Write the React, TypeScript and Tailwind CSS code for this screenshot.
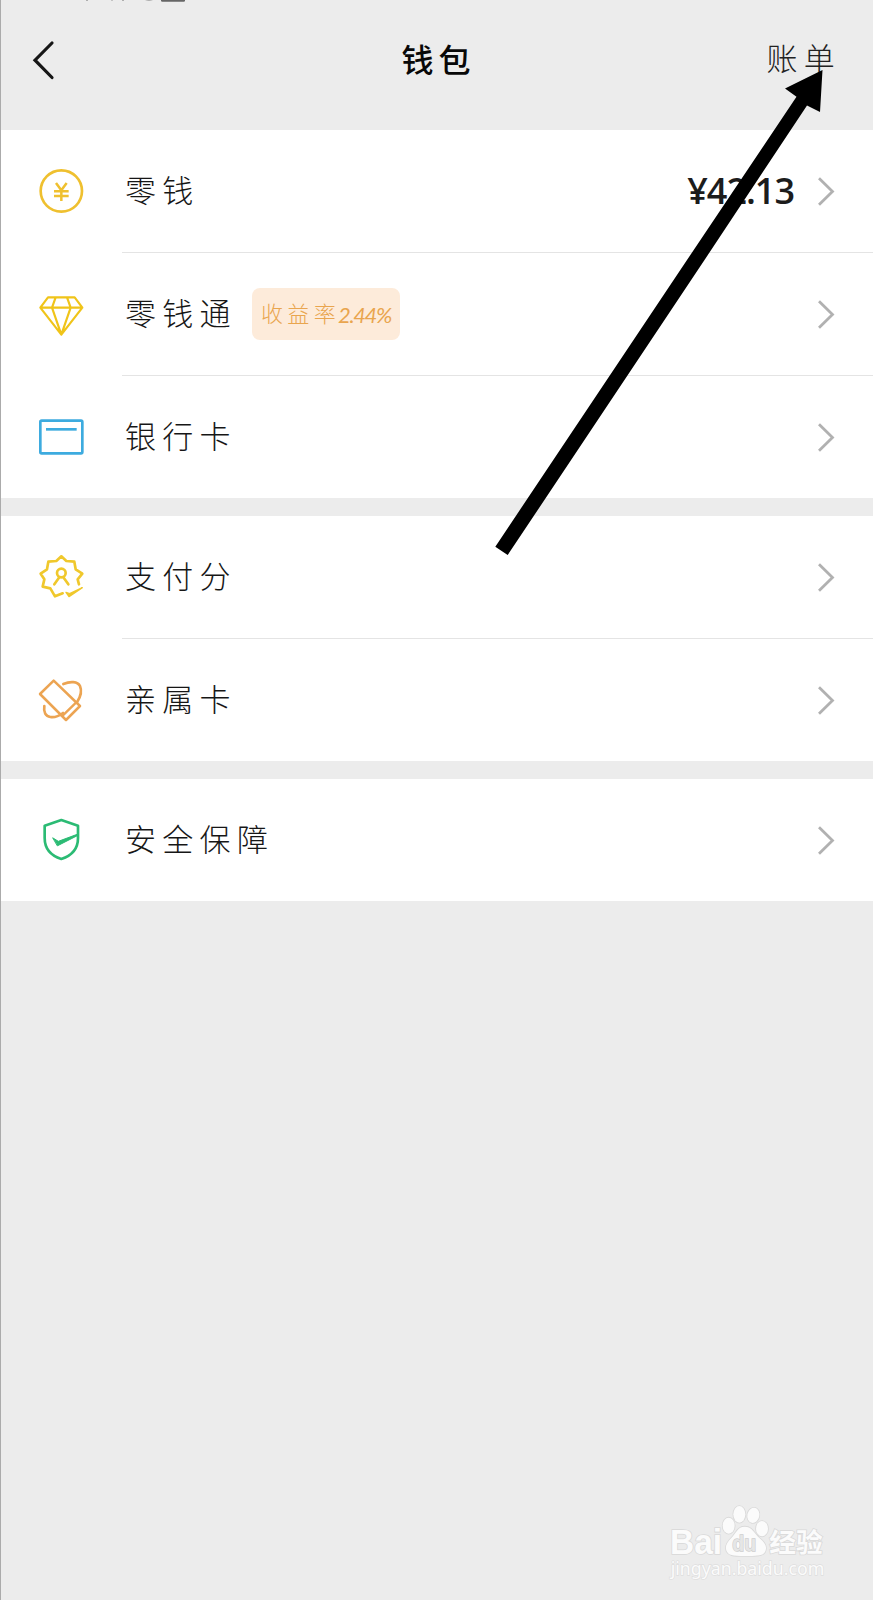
import React from 'react';

interface IconProps {
  viewBox: string;
  color: string;
  children: React.ReactNode;
}

const RowIcon: React.FC<IconProps> = ({ viewBox, color, children }) => (
  <svg className="h-12 w-12 shrink-0" viewBox={viewBox} fill="none" stroke={color} strokeWidth={8} strokeLinejoin="round" strokeLinecap="round">
    {children}
  </svg>
);

const CoinIcon = () => (
  <RowIcon viewBox="51 51 144 144" color="#efc02f">
    <circle cx="124" cy="123" r="62" />
    <path d="M108 99l16 22 16-22M124 121v32M102 124h44M102 138h44" strokeWidth={7.5} strokeLinecap="butt" />
  </RowIcon>
);

const DiamondIcon = () => (
  <RowIcon viewBox="51 420 144 144" color="#f0c419">
    <path d="M84 442h80l23 31-63 81-63-81zM61 473h126M107 442l-11 31 28 81 28-81-11-31" strokeWidth={6.5} />
  </RowIcon>
);

const CardIcon = () => (
  <RowIcon viewBox="51 69 144 144" color="#3dabdf">
    <rect x="61" y="92" width="126" height="98" rx="4" />
    <path d="M78 118h92" strokeLinecap="butt" />
  </RowIcon>
);

const ScoreIcon = () => (
  <RowIcon viewBox="51 39 144 144" color="#f0c82c">
    <path d="M177 133L173 118 187 101 167 88 163 65 139 63 124 49 109 63 85 65 81 88 62 101 73 118 68 140 91 145 105 169 128 160" />
    <circle cx="124" cy="99" r="13" />
    <path d="M103 133L118 112M145 133L130 112" />
    <path d="M138 157L149 161 187 143 147 170z" fill="#f0c82c" strokeWidth={4} />
  </RowIcon>
);

const FamilyCardIcon = () => (
  <RowIcon viewBox="51 408 144 144" color="#eca452">
    <path d="M101 422L60 462 138 540 180 498z" strokeWidth={7.5} />
    <path d="M128 527L168 488" strokeWidth={7} />
    <path d="M130 432C151 423 173 424 180 438 186 452 182 470 171 487" />
    <path d="M73 498C70 517 77 529 91 531 104 533 117 528 129 519" />
  </RowIcon>
);

const ShieldIcon = () => (
  <RowIcon viewBox="51 138 144 144" color="#2bbb74">
    <path d="M124 150L174 167V204C174 234 158 256 124 267 90 256 74 234 74 204V167z" />
    <path d="M99 204L115 214 174 192V196L113 227z" fill="#2bbb74" strokeWidth={3} />
  </RowIcon>
);

const Chevron = () => (
  <svg className="h-8 w-5 shrink-0" viewBox="0 0 20 32" fill="none" stroke="#b1b1b1" strokeWidth={2.8}>
    <path d="M3 3.2l13.5 13.3L3 29.8" />
  </svg>
);

interface WalletRow {
  label: string;
  icon: React.ReactNode;
  amount?: string;
  rate?: string;
}

const sections: WalletRow[][] = [
  [
    { label: '零钱', icon: <CoinIcon />, amount: '¥42.13' },
    { label: '零钱通', icon: <DiamondIcon />, rate: '2.44%' },
    { label: '银行卡', icon: <CardIcon /> },
  ],
  [
    { label: '支付分', icon: <ScoreIcon /> },
    { label: '亲属卡', icon: <FamilyCardIcon /> },
  ],
  [{ label: '安全保障', icon: <ShieldIcon /> }],
];

const Row: React.FC<{ row: WalletRow; last: boolean }> = ({ row, last }) => (
  <div className="flex pl-9">
    <div className="flex h-[122px] items-center">{row.icon}</div>
    <div className={`ml-[37px] flex flex-1 items-center pr-[37px] ${last ? 'h-[122px]' : 'h-[123px] border-b border-[#e4e4e4]'}`}>
      <span className="ml-[3px] text-[31px] leading-none font-light tracking-[6.3px] text-[#161616]">{row.label}</span>
      {row.rate && (
        <span className="ml-[15px] flex h-[52px] w-[148px] items-center rounded-lg bg-[#fdebda] pl-[9px] text-[#e9a54e]">
          <span className="mt-0.5 text-[22px] leading-none font-light tracking-[4.4px]">收益率</span>
          <span className="mt-0.5 -ml-0.5 font-['Lato',sans-serif] text-[22px] leading-none tracking-[-1.4px] italic">{row.rate}</span>
        </span>
      )}
      <span className="ml-auto flex items-center">
        {row.amount && (
          <span className="mr-[22px] -mt-px font-['Open_Sans',sans-serif] text-[36px] leading-none font-semibold tracking-[-1px] text-[#1c1c1c]">{row.amount}</span>
        )}
        <Chevron />
      </span>
    </div>
  </div>
);

// Paw logo with the site name underneath
const Watermark = () => (
  <svg className="absolute top-[1490px] left-[650px] h-[110px] w-[223px]" viewBox="0 0 669 330" fill="#fbfbfb" stroke="#d9d9d9" strokeWidth={5} paintOrder="stroke">
    <text x="60" y="192" fontFamily="Liberation Sans" fontWeight="bold" fontSize="103" textLength="156" lengthAdjust="spacingAndGlyphs">Bai</text>
    <ellipse cx="236" cy="107" rx="18" ry="24" />
    <ellipse cx="268" cy="73" rx="18" ry="25" />
    <ellipse cx="310" cy="76" rx="18" ry="23" transform="rotate(12 310 76)" />
    <ellipse cx="336" cy="116" rx="18" ry="23" />
    <path d="M284 110C306 110 313 130 329 145 345 158 353 170 345 186 338 198 323 198 284 198 246 198 236 196 230 184 224 170 230 158 244 144 258 130 263 110 284 110z" />
    <text x="247" y="184" fill="#e6e6e6" stroke="#cfcfcf" strokeWidth={4} fontFamily="Liberation Sans" fontWeight="bold" fontSize="64" textLength="72" lengthAdjust="spacingAndGlyphs">du</text>
    <text x="358" y="187" fontFamily="Noto Sans CJK SC" fontWeight="bold" fontSize="80">经验</text>
    <text x="62" y="256" strokeWidth={4} stroke="#dedede" fontFamily="Noto Sans" fontSize="54" textLength="461" lengthAdjust="spacingAndGlyphs">jingyan.baidu.com</text>
  </svg>
);

const Arrow = () => (
  <svg className="pointer-events-none absolute top-0 left-0 h-[600px] w-[873px]" viewBox="0 0 873 600">
    <path d="M822.5 70L785 88.5 796.5 96.7 687 260 495.3 546.7 507.7 555 704.5 260 807 105.5 820 112z" fill="#000" />
  </svg>
);

export default function App() {
  return (
    <div className="relative h-[1600px] w-[873px] overflow-hidden bg-[#ececec] font-['Liberation_Sans','Noto_Sans_CJK_SC',sans-serif]">
      <div className="flex h-full flex-col border-l border-[#ababab]">
        <header className="grid h-[130px] grid-cols-3 items-center pr-[32px] pb-[11px] pl-[31px]">
          <svg className="h-10 w-6" viewBox="0 0 24 40" fill="none" stroke="#161616" strokeWidth={3.2} strokeLinecap="round">
            <path d="M20 3L3 20.2 20 37.5" />
          </svg>
          <h1 className="mt-0.5 pl-[4px] text-center text-[32px] leading-none font-medium tracking-[5px] text-[#080808]">钱包</h1>
          <span className="text-right text-[31px] leading-none font-light tracking-[6.3px] text-[#222]">账单</span>
        </header>
        <main className="flex flex-col gap-[18px]">
          {sections.map((rows, i) => (
            <section key={i} className="bg-white">
              {rows.map((row, j) => (
                <Row key={row.label} row={row} last={j === rows.length - 1} />
              ))}
            </section>
          ))}
        </main>
      </div>
      {/* bottom edge of the scrolled-off status bar */}
      <svg className="absolute top-0 left-0 h-1 w-[200px]" viewBox="0 0 200 4" fill="#666">
        <path d="M161 0h24v.5q0 1.3-1.3 1.3h-21.4q-1.3 0-1.3-1.3z" />
        <path d="M86 0h2v.8h-2zM111 0h2v.6h-2zM122 0h2v.7h-2zM145 0h8q-4 1.4-8 0z" fill="#999" />
      </svg>
      <Watermark />
      <Arrow />
    </div>
  );
}
